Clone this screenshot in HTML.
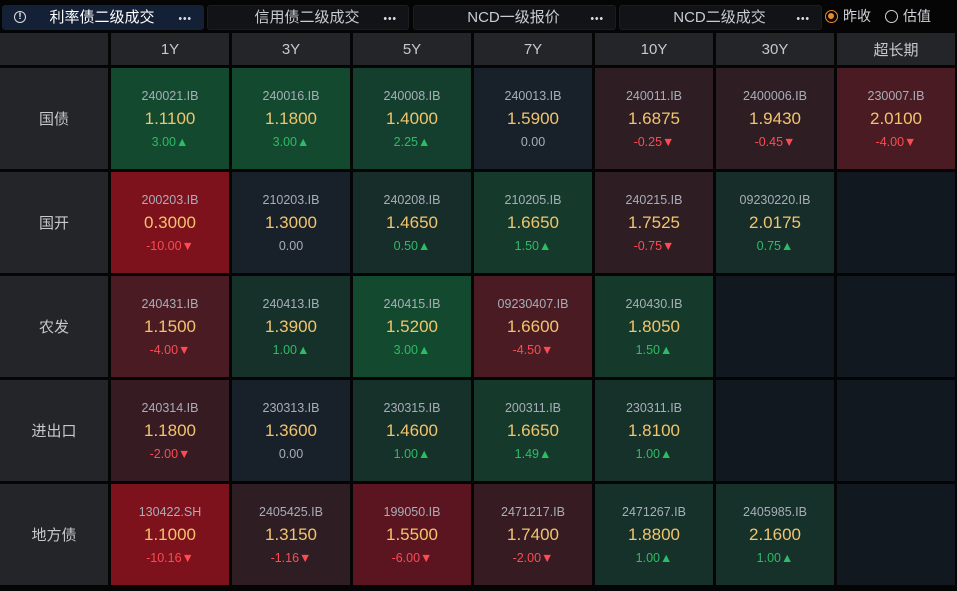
<!DOCTYPE html>
<html><head><meta charset="utf-8"><style>
*{margin:0;padding:0;box-sizing:border-box}
body{width:957px;height:591px;background:#050505;font-family:"Liberation Sans","Noto Sans CJK SC",sans-serif;overflow:hidden;position:relative}
.tab{position:absolute;top:5px;height:25px;background:#121316;border:1px solid #1c1d21;border-radius:3px;color:#c9ccd1;font-size:15px;line-height:23px}
.tab .t{position:absolute;left:0;right:0;text-align:center}
.tab .d{position:absolute;right:12px;top:11px;width:13px;height:3px;background:radial-gradient(circle,#d8dbe0 1.3px,transparent 1.6px) 0 0/4.5px 3px repeat-x}
.grid{position:absolute;left:0;top:33px;display:grid;grid-template-columns:108px repeat(5,118px) 118px 118px;grid-template-rows:32px repeat(5,101px);gap:3px}
.h{background:#232529;color:#c5c8cd;font-size:15px;display:flex;align-items:center;justify-content:center}
.c{display:flex;flex-direction:column;align-items:center;justify-content:center}
.code{font-size:12.5px;color:#a8aeb8;height:22px;line-height:22px}
.v{font-size:17px;color:#f2c46d;height:24px;line-height:24px}
.ch{font-size:12.5px;height:22px;line-height:22px}
.up{color:#2bbd63}.dn{color:#ff4a52}.z{color:#a8aeb8}
.g3{background:#12492f}.g2{background:#153a2c}.g1{background:#16302a}.g0{background:#172d2a}
.r5{background:#7d111c}.r4{background:#5a1520}.r3{background:#4a1b22}.r2{background:#371b23}.r1{background:#2e1e24}
.zz{background:#182029}.e{background:#121820}
.rad{position:absolute;top:8px;font-size:14px;color:#d0d3d8;line-height:16px}
.rad i{display:inline-block;width:13px;height:13px;border-radius:50%;border:1.5px solid #cfd2d6;vertical-align:-2px;margin-right:5px;position:relative}
.rad i.on{border-color:#f08a24}
.rad i.on:after{content:"";position:absolute;left:2px;top:2px;width:6px;height:6px;border-radius:50%;background:#f08a24}
</style></head><body>
<div class="tab" style="left:2px;width:202px;background:#132035;border-color:#132035;color:#fff"><span style="position:absolute;left:11px;top:5px;width:12px;height:12px;border:1.5px solid #ddd;border-radius:50%;font-size:9px;line-height:9px;text-align:center;font-weight:bold">!</span><span class="t" style="left:-2px">利率债二级成交</span><span class="d"></span></div>
<div class="tab" style="left:207px;width:202px"><span class="t" style="left:-2px">信用债二级成交</span><span class="d"></span></div>
<div class="tab" style="left:413px;width:203px"><span class="t" style="left:-2px">NCD一级报价</span><span class="d"></span></div>
<div class="tab" style="left:619px;width:203px"><span class="t" style="left:-2px">NCD二级成交</span><span class="d"></span></div>
<div class="rad" style="left:825px"><i class="on"></i>昨收</div>
<div class="rad" style="left:885px"><i></i>估值</div>
<div class="grid">
<div class="h"></div><div class="h">1Y</div><div class="h">3Y</div><div class="h">5Y</div><div class="h">7Y</div><div class="h">10Y</div><div class="h">30Y</div><div class="h">超长期</div>

<div class="h">国债</div>
<div class="c g3"><div class="code">240021.IB</div><div class="v">1.1100</div><div class="ch up">3.00▲</div></div>
<div class="c g3"><div class="code">240016.IB</div><div class="v">1.1800</div><div class="ch up">3.00▲</div></div>
<div class="c g3" style="background:#143f2e"><div class="code">240008.IB</div><div class="v">1.4000</div><div class="ch up">2.25▲</div></div>
<div class="c zz"><div class="code">240013.IB</div><div class="v">1.5900</div><div class="ch z">0.00</div></div>
<div class="c r1"><div class="code">240011.IB</div><div class="v">1.6875</div><div class="ch dn">-0.25▼</div></div>
<div class="c r1"><div class="code">2400006.IB</div><div class="v">1.9430</div><div class="ch dn">-0.45▼</div></div>
<div class="c r3"><div class="code">230007.IB</div><div class="v">2.0100</div><div class="ch dn">-4.00▼</div></div>

<div class="h">国开</div>
<div class="c r5"><div class="code">200203.IB</div><div class="v">0.3000</div><div class="ch dn">-10.00▼</div></div>
<div class="c zz"><div class="code">210203.IB</div><div class="v">1.3000</div><div class="ch z">0.00</div></div>
<div class="c g0"><div class="code">240208.IB</div><div class="v">1.4650</div><div class="ch up">0.50▲</div></div>
<div class="c g2"><div class="code">210205.IB</div><div class="v">1.6650</div><div class="ch up">1.50▲</div></div>
<div class="c r1"><div class="code">240215.IB</div><div class="v">1.7525</div><div class="ch dn">-0.75▼</div></div>
<div class="c g0"><div class="code">09230220.IB</div><div class="v">2.0175</div><div class="ch up">0.75▲</div></div>
<div class="c e"></div>

<div class="h">农发</div>
<div class="c r3"><div class="code">240431.IB</div><div class="v">1.1500</div><div class="ch dn">-4.00▼</div></div>
<div class="c g1"><div class="code">240413.IB</div><div class="v">1.3900</div><div class="ch up">1.00▲</div></div>
<div class="c g3"><div class="code">240415.IB</div><div class="v">1.5200</div><div class="ch up">3.00▲</div></div>
<div class="c r3"><div class="code">09230407.IB</div><div class="v">1.6600</div><div class="ch dn">-4.50▼</div></div>
<div class="c g2"><div class="code">240430.IB</div><div class="v">1.8050</div><div class="ch up">1.50▲</div></div>
<div class="c e"></div><div class="c e"></div>

<div class="h">进出口</div>
<div class="c r2"><div class="code">240314.IB</div><div class="v">1.1800</div><div class="ch dn">-2.00▼</div></div>
<div class="c zz"><div class="code">230313.IB</div><div class="v">1.3600</div><div class="ch z">0.00</div></div>
<div class="c g1"><div class="code">230315.IB</div><div class="v">1.4600</div><div class="ch up">1.00▲</div></div>
<div class="c g2"><div class="code">200311.IB</div><div class="v">1.6650</div><div class="ch up">1.49▲</div></div>
<div class="c g1"><div class="code">230311.IB</div><div class="v">1.8100</div><div class="ch up">1.00▲</div></div>
<div class="c e"></div><div class="c e"></div>

<div class="h">地方债</div>
<div class="c r5"><div class="code">130422.SH</div><div class="v">1.1000</div><div class="ch dn">-10.16▼</div></div>
<div class="c r1"><div class="code">2405425.IB</div><div class="v">1.3150</div><div class="ch dn">-1.16▼</div></div>
<div class="c r4"><div class="code">199050.IB</div><div class="v">1.5500</div><div class="ch dn">-6.00▼</div></div>
<div class="c r2"><div class="code">2471217.IB</div><div class="v">1.7400</div><div class="ch dn">-2.00▼</div></div>
<div class="c g1"><div class="code">2471267.IB</div><div class="v">1.8800</div><div class="ch up">1.00▲</div></div>
<div class="c g1"><div class="code">2405985.IB</div><div class="v">2.1600</div><div class="ch up">1.00▲</div></div>
<div class="c e"></div>
</div>
</body></html>
